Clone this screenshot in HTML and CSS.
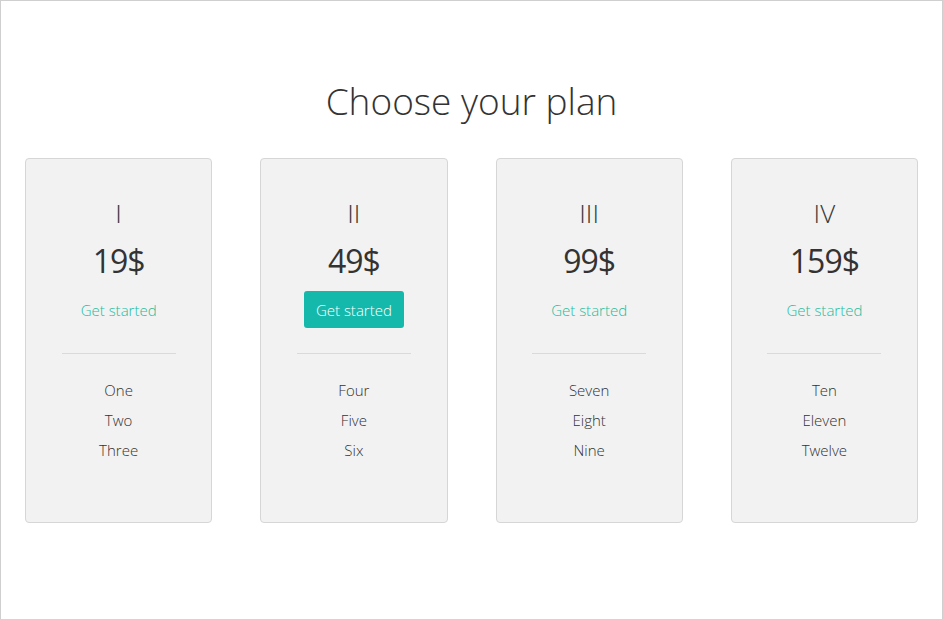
FILE: index.html
```html
<!DOCTYPE html>
<html>
<head>
<meta charset="utf-8">
<link rel="stylesheet" href="styles.css">
</head>
<body>
<div class="frame">
  <h1 class="title">Choose your plan</h1>
  <div class="plans">
    <div class="col">
      <div class="card">
        <div class="numeral">I</div>
        <div class="price">19$</div>
        <div class="action"><a class="link">Get started</a></div>
        <hr class="divider">
        <ul class="features"><li>One</li><li>Two</li><li>Three</li></ul>
      </div>
    </div>
    <div class="col">
      <div class="card">
        <div class="numeral">II</div>
        <div class="price">49$</div>
        <div class="action"><a class="button">Get started</a></div>
        <hr class="divider">
        <ul class="features"><li>Four</li><li>Five</li><li>Six</li></ul>
      </div>
    </div>
    <div class="col">
      <div class="card">
        <div class="numeral">III</div>
        <div class="price">99$</div>
        <div class="action"><a class="link">Get started</a></div>
        <hr class="divider">
        <ul class="features"><li>Seven</li><li>Eight</li><li>Nine</li></ul>
      </div>
    </div>
    <div class="col">
      <div class="card">
        <div class="numeral">IV</div>
        <div class="price">159$</div>
        <div class="action"><a class="link">Get started</a></div>
        <hr class="divider">
        <ul class="features"><li>Ten</li><li>Eleven</li><li>Twelve</li></ul>
      </div>
    </div>
  </div>
</div>
</body>
</html>
```
FILE: styles.css
```css
* { box-sizing: border-box; }
html, body { margin: 0; padding: 0; background: #fff; }
body {
  font-family: "Open Sans", "Noto Sans", sans-serif;
  color: #333;
  overflow: hidden;
  height: 619px;
}
.frame {
  width: 943px;
  height: 619px;
  border: 1px solid #cfcfcf;
  border-bottom: none;
}
.title {
  margin: 0;
  padding-top: 73px;
  height: 157px;
  text-align: center;
  font-weight: 300;
  font-size: 37px;
  line-height: 54px;
  color: #333;
}
.plans {
  display: grid;
  grid-template-columns: repeat(4, 1fr);
}
.col { padding: 0 24px; }
.card {
  height: 365px;
  background: #f2f2f2;
  border: 1px solid #d6d6d6;
  border-radius: 4px;
  text-align: center;
  padding-top: 39px;
}
.numeral {
  font-size: 26px;
  font-weight: 300;
  line-height: 30px;
  color: #3a3a3a;
}
.price {
  margin-top: 13px;
  font-size: 32px;
  font-weight: 400;
  letter-spacing: -1px;
  line-height: 40px;
  color: #333;
}
.action {
  margin-top: 10px;
  height: 37px;
  display: flex;
  justify-content: center;
  align-items: center;
}
.link {
  color: #1abc9c;
  font-size: 15px;
  font-weight: 300;
}
.button {
  display: inline-flex;
  align-items: center;
  justify-content: center;
  height: 37px;
  width: 100px;
  background: #14b9ab;
  color: #fff;
  border-radius: 3px;
  font-size: 15px;
  font-weight: 300;
}
.divider {
  margin: 25px auto 0;
  width: 114px;
  border: none;
  border-top: 1px solid #dadada;
  height: 0;
}
.features {
  list-style: none;
  margin: 21px 0 0;
  padding: 0;
  font-size: 15px;
  font-weight: 300;
  line-height: 30px;
  color: #333;
}
```
